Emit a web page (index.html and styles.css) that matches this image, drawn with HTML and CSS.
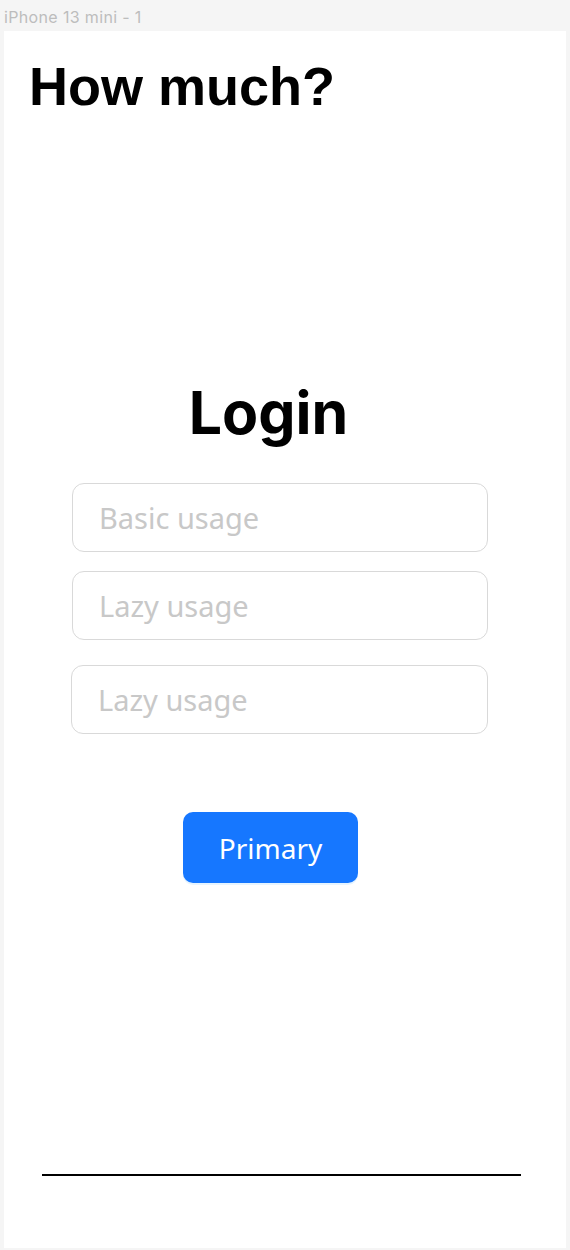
FILE: index.html
```html
<!DOCTYPE html>
<html lang="en">
<head>
<meta charset="utf-8">
<title>How much?</title>
<link rel="stylesheet" href="styles.css">
</head>
<body>
<div class="frame-label">iPhone 13 mini - 1</div>
<main class="frame">
  <h1 class="app-title">How much?</h1>
  <section class="login">
    <h2 class="login-title">Login</h2>
    <input class="field" type="text" placeholder="Basic usage">
    <input class="field" type="text" placeholder="Lazy usage">
    <input class="field field-third" type="text" placeholder="Lazy usage">
    <button class="btn-primary" type="button">Primary</button>
  </section>
  <div class="divider"></div>
</main>
</body>
</html>
```
FILE: styles.css
```css
html, body {
  margin: 0;
  padding: 0;
}
body {
  background: #f5f5f5;
  width: 570px;
  height: 1250px;
  overflow: hidden;
}
.frame-label {
  height: 31px;
  padding-left: 4px;
  box-sizing: border-box;
  padding-top: 8px;
  font-family: Inter, "Liberation Sans", Arial, sans-serif;
  font-size: 16px;
  letter-spacing: 0.35px;
  line-height: 18px;
  color: #bdbdbd;
}
.frame {
  margin-left: 4px;
  width: 562px;
  height: 1217px;
  background: #ffffff;
  box-sizing: border-box;
  padding-top: 28px;
  padding-bottom: 72px;
  display: flex;
  flex-direction: column;
}
.app-title {
  margin: 0 0 0 25px;
  font-family: "Liberation Sans", Arial, sans-serif;
  font-weight: 700;
  font-size: 54px;
  line-height: 54px;
  color: #000;
}
.login {
  margin-top: 270px;
  margin-left: 67px;
  width: 417px;
  display: flex;
  flex-direction: column;
}
.login-title {
  margin: 0 0 40px 0;
  padding-right: 22px;
  text-align: center;
  font-family: Inter, Roboto, "Liberation Sans", sans-serif;
  font-weight: 700;
  font-size: 59px;
  line-height: 60px;
  color: #000;
}
.field {
  box-sizing: border-box;
  width: 416px;
  height: 69px;
  margin-left: 1px;
  border: 1px solid #d9d9d9;
  border-radius: 12px;
  padding: 0 26px;
  font-family: "Noto Sans", "Open Sans", sans-serif;
  font-size: 29px;
  color: #000;
  background: #fff;
  outline: none;
}
.field::placeholder {
  color: #c8c8c8;
}
.field + .field {
  margin-top: 19px;
}
.field.field-third {
  margin-top: 25px;
  margin-left: 0;
  width: 417px;
}
.btn-primary {
  margin-top: 78px;
  margin-left: 112px;
  width: 175px;
  height: 71px;
  border: none;
  border-radius: 10px;
  background: #1677ff;
  color: #fff;
  font-family: "Noto Sans", "Open Sans", sans-serif;
  font-size: 28px;
  box-shadow: 0 2px 0 rgba(5, 145, 255, 0.1);
  padding: 0;
}
.divider {
  margin-top: auto;
  margin-left: 38px;
  width: 479px;
  height: 2px;
  background: #000;
}
```
